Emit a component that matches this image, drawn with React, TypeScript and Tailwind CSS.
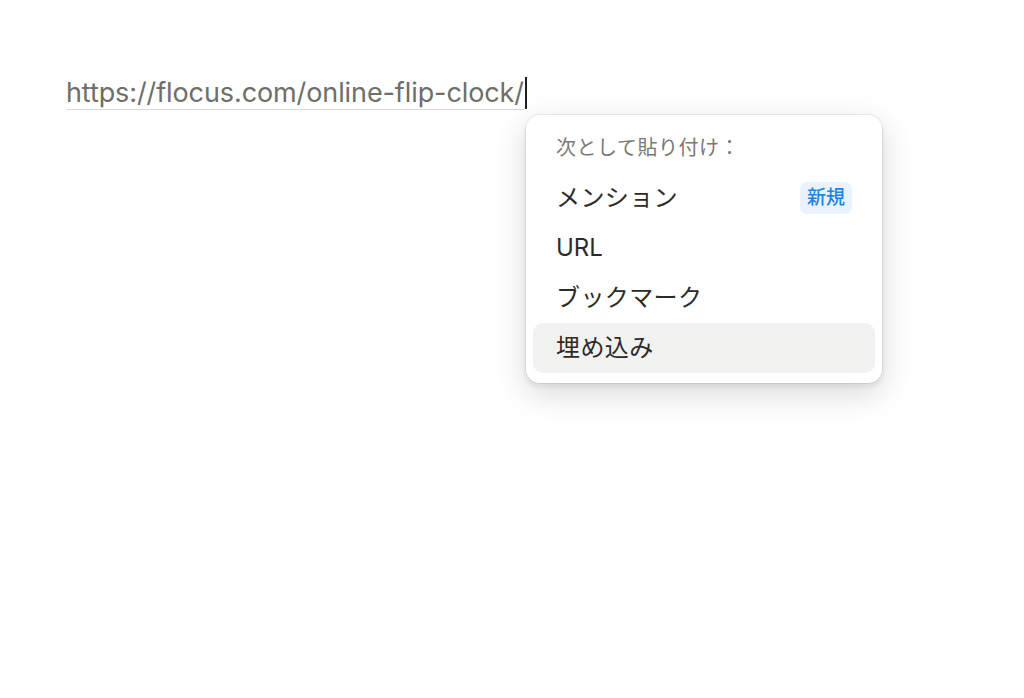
import React from "react";

const latin = '"Inter", "Noto Sans CJK JP", sans-serif';
const jp = '"Inter", "Noto Sans CJK JP", sans-serif';

export default function App() {
  return (
    <div className="relative w-[1024px] h-[698px] bg-white overflow-hidden" style={{ fontFamily: latin }}>
      <div className="pl-[66px] pt-[77px]">
        <div className="flex items-center h-[33px]">
          <span className="text-[27px] leading-[32px] tracking-[-0.1px] text-[#6f6e6a] border-b border-[#d9d9d7]">
            https://flocus.com/online-flip-clock/
          </span>
          <span className="w-[2px] h-[32px] bg-[#1f1f1f] ml-[1px] -mt-[2px]" />
        </div>
      </div>

      <div
        className="absolute left-[526px] top-[115px] w-[356px] rounded-[14px] bg-white pt-[7px] pb-[10px] px-[7px] shadow-[0_0_0_1px_rgba(15,15,15,0.06),0_3px_6px_rgba(15,15,15,0.08),0_10px_32px_rgba(15,15,15,0.16)]"
        style={{ fontFamily: jp }}
      >
        <div className="h-[51px] flex items-center px-[23px] text-[20px] tracking-[0.5px] text-[#7a7975]">
          次として貼り付け：
        </div>
        <div className="h-[50px] flex items-center justify-between px-[23px] rounded-[10px]">
          <span className="text-[24px] tracking-[0.4px] text-[#2c2b28]">メンション</span>
          <span className="h-[32px] px-[7px] flex items-center rounded-[7px] bg-[#eaf3fd] text-[#2383e2] text-[19px] font-medium">
            新規
          </span>
        </div>
        <div className="h-[50px] flex items-center px-[23px] rounded-[10px]">
          <span className="text-[24px] text-[#2c2b28]">URL</span>
        </div>
        <div className="h-[50px] flex items-center px-[23px] rounded-[10px]">
          <span className="text-[24px] tracking-[0.4px] text-[#2c2b28]">ブックマーク</span>
        </div>
        <div className="h-[50px] flex items-center px-[23px] rounded-[10px] bg-[#f2f2f1]">
          <span className="text-[24px] tracking-[0.4px] text-[#2c2b28]">埋め込み</span>
        </div>
      </div>
    </div>
  );
}
